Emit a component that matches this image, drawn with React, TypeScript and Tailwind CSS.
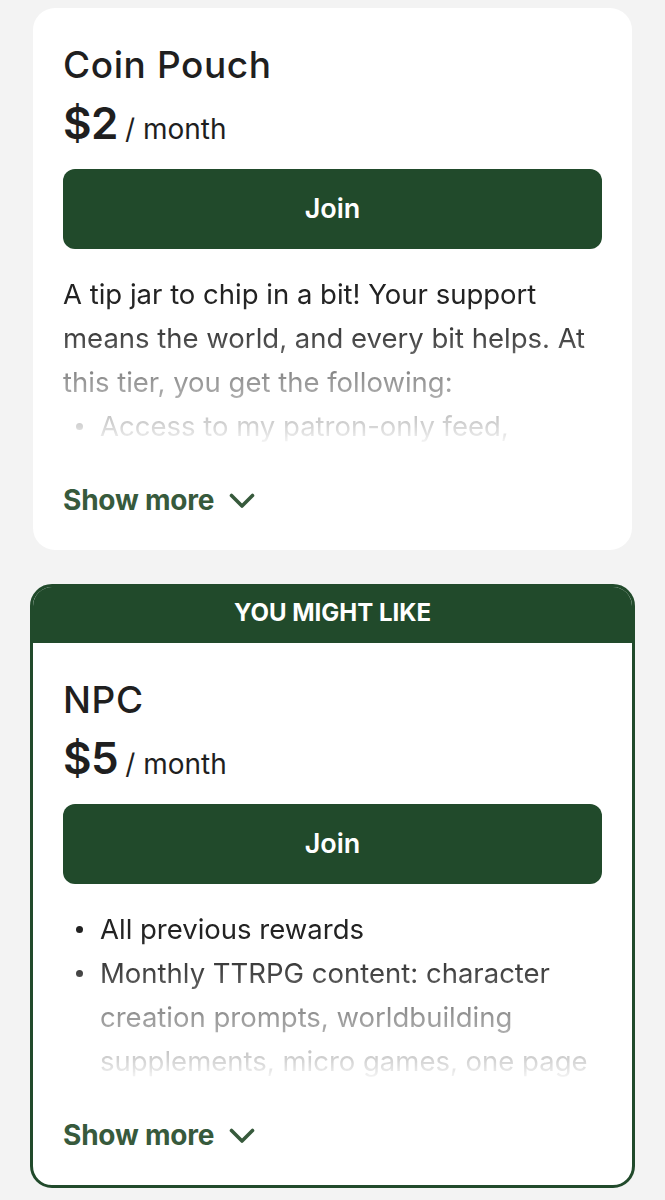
import type { ReactNode } from 'react';

const GREEN = 'bg-[#214a2b]';

function Chevron() {
  return (
    <svg width="26" height="16" viewBox="0 0 26 16" fill="none" className="mt-[2px]">
      <polyline points="2.5,2.5 13,13 23.5,2.5" stroke="#375a3c" strokeWidth="3.6" strokeLinecap="round" strokeLinejoin="round" />
    </svg>
  );
}

function Bullet({ children }: { children: ReactNode }) {
  return (
    <li className="flex">
      <span className="flex h-[44px] w-[37px] shrink-0 items-center self-start pl-[13px]">
        <span className="h-[7px] w-[7px] rounded-full bg-current" />
      </span>
      <span>{children}</span>
    </li>
  );
}

function TierBody({ title, price, children }: { title: string; price: string; children: ReactNode }) {
  return (
    <div className="px-[30px] pt-[35px] pb-[34px]">
      <h2 className="text-[37px] leading-[44px] font-medium tracking-[0.6px] text-[#1f1f1f]">{title}</h2>
      <div className="mt-[12px] flex h-[48px] items-baseline gap-[7px] leading-[48px] text-[#1f1f1f]">
        <span className="text-[44px] font-semibold tracking-[-0.5px]">{price}</span>
        <span className="text-[28px]">/ month</span>
      </div>
      <button className={`mt-[22px] flex h-[80px] w-full items-center justify-center rounded-[12px] ${GREEN} text-[27px] font-semibold text-white`}>
        Join
      </button>
      <div className="mt-[23px] max-h-[176px] overflow-hidden text-[27.5px] leading-[44px] text-[#222] [mask-image:linear-gradient(to_bottom,black_15%,rgba(0,0,0,0.85)_37%,rgba(0,0,0,0.47)_62%,rgba(0,0,0,0.2)_87%,transparent_100%)]">
        {children}
      </div>
      <button className="mt-[36px] flex items-center gap-[15px] text-[28px] leading-[32px] font-bold tracking-[-0.2px] text-[#375a3c]">
        <span>Show more</span>
        <Chevron />
      </button>
    </div>
  );
}

export default function App() {
  return (
    <div className="min-h-[1200px] bg-[#f3f3f3] px-[33px] pt-[8px] pb-[40px] font-[Inter,'Noto_Sans',sans-serif]">
      <div className="rounded-[22px] bg-white">
        <TierBody title="Coin Pouch" price="$2">
          <p>A tip jar to chip in a bit! Your support means the world, and every bit helps. At this tier, you get the following:</p>
          <ul>
            <Bullet>Access to my patron-only feed, behind-the-scenes updates and sketches</Bullet>
            <Bullet>My heartfelt thanks</Bullet>
          </ul>
        </TierBody>
      </div>

      <div className="mx-[-3px] mt-[34px] overflow-hidden rounded-[22px] border-[3px] border-[#214a2b] bg-white">
        <div className={`flex h-[56px] items-center justify-center pb-[4px] ${GREEN} text-[24px] font-bold tracking-[0px] text-white`}>
          YOU MIGHT LIKE
        </div>
        <TierBody title="NPC" price="$5">
          <ul>
            <Bullet>All previous rewards</Bullet>
            <Bullet>Monthly TTRPG content: character creation prompts, worldbuilding supplements, micro games, one page adventures and more</Bullet>
            <Bullet>Early access to new releases</Bullet>
          </ul>
        </TierBody>
      </div>
    </div>
  );
}
